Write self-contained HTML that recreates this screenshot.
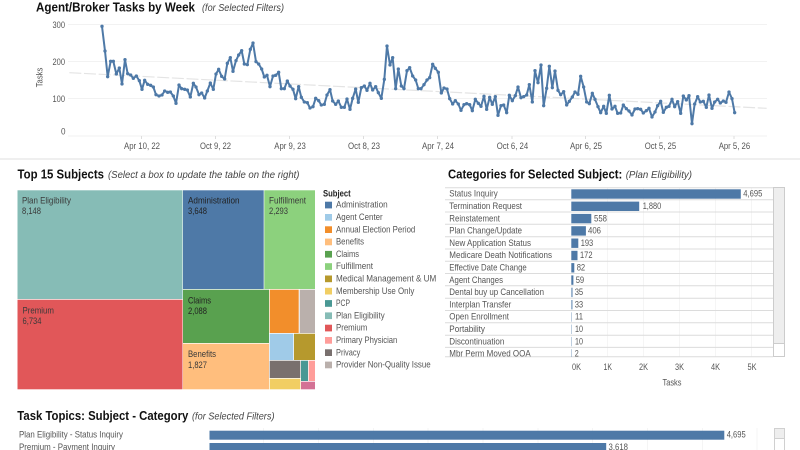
<!DOCTYPE html>
<html><head><meta charset="utf-8"><style>
html,body{margin:0;padding:0;background:#fff}
svg{display:block}
text{font-family:"Liberation Sans",sans-serif;font-size:9.5px;fill:#555}
.t{font-weight:bold;font-size:13px;fill:#111}
.i{font-style:italic;font-size:10.5px;fill:#444}
.d{fill:#3a3a3a}
</style></head><body>
<svg width="800" height="450" viewBox="0 0 800 450" xmlns="http://www.w3.org/2000/svg">
<defs>
<marker id="m" markerUnits="userSpaceOnUse" markerWidth="12" markerHeight="12" viewBox="0 0 12 12" refX="6" refY="6"><circle cx="6" cy="6" r="5" fill="#4e79a7"/></marker>
<clipPath id="c1"><rect x="445" y="187" width="330" height="170"/></clipPath>
</defs>
<rect width="800" height="450" fill="#fff"/>

<!-- Top chart -->
<text class="t" x="36" y="11.5" textLength="159" lengthAdjust="spacingAndGlyphs">Agent/Broker Tasks by Week</text>
<text class="i" x="202" y="11" textLength="82" lengthAdjust="spacingAndGlyphs">(for Selected Filters)</text>
<g stroke="#f2f2f2" stroke-width="1">
<path d="M68 24.5H767M68 61.5H767M68 98.5H767M68 136H767"/>
<path d="M141.5 136v3M215.5 136v3M289.5 136v3M363.5 136v3M437.5 136v3M512 136v3M585.5 136v3M659.5 136v3M734 136v3" stroke="#ddd"/>
</g>
<text x="52.5" y="28" textLength="12.5" lengthAdjust="spacingAndGlyphs">300</text>
<text x="52.5" y="65" textLength="12.5" lengthAdjust="spacingAndGlyphs">200</text>
<text x="52.5" y="102" textLength="12.5" lengthAdjust="spacingAndGlyphs">100</text>
<text x="61" y="134.5" textLength="4.5" lengthAdjust="spacingAndGlyphs">0</text>
<text transform="translate(42.5,87.3) rotate(-90)" textLength="19.7" lengthAdjust="spacingAndGlyphs">Tasks</text>
<text x="124" y="149" textLength="36" lengthAdjust="spacingAndGlyphs">Apr 10, 22</text>
<text x="200" y="149" textLength="31" lengthAdjust="spacingAndGlyphs">Oct 9, 22</text>
<text x="274.3" y="149" textLength="31.5" lengthAdjust="spacingAndGlyphs">Apr 9, 23</text>
<text x="348" y="149" textLength="32" lengthAdjust="spacingAndGlyphs">Oct 8, 23</text>
<text x="422" y="149" textLength="32" lengthAdjust="spacingAndGlyphs">Apr 7, 24</text>
<text x="496.7" y="149" textLength="31.5" lengthAdjust="spacingAndGlyphs">Oct 6, 24</text>
<text x="570" y="149" textLength="32" lengthAdjust="spacingAndGlyphs">Apr 6, 25</text>
<text x="644.7" y="149" textLength="31.5" lengthAdjust="spacingAndGlyphs">Oct 5, 25</text>
<text x="718.7" y="149" textLength="31.5" lengthAdjust="spacingAndGlyphs">Apr 5, 26</text>
<g transform="scale(.33333)">
<line x1="208" y1="218" x2="2300" y2="325" stroke="#e4e4e4" stroke-width="3.5" stroke-dasharray="36 8"/>
<g fill="none" stroke="#4e79a7" stroke-width="6" stroke-linejoin="round">
<polyline marker-start="url(#m)" marker-mid="url(#m)" marker-end="url(#m)" points="306,79 315,153 323,230 332,184 340,184 349,222 358,204 366,252 375,179 383,221 392,225 400,235 409,228 418,242 426,268 434,241 443,253 452,256 460,261 468,284 477,288 486,285 494,273 503,277 511,276 520,288 528,310 537,255 545,266 554,268 562,270 571,291 580,250 588,261 597,284 605,279 614,294 622,273 631,249 640,268 648,222 656,208 665,229 674,237 682,190 691,173 699,214 708,182 716,165 725,152 733,192 742,194 751,148 759,129 768,185 776,192 785,207 793,231 801,226"/>
<polyline transform="translate(795,0)" marker-mid="url(#m)" marker-end="url(#m)" points="6,226 15,260 24,228 32,226 41,217 49,266 58,266 67,243 75,258 84,268 92,296 101,260 109,292 118,306 127,308 135,324 144,320 152,295 161,302 169,315 178,313 186,285 195,269 203,303 212,313 220,303 229,322 238,322 246,297 255,328 263,295 272,267 280,307 289,263 298,258 306,271 315,250 323,270 332,260 340,278 349,295 358,238 366,138 375,195 383,173 392,266 400,207 409,258 417,266 426,212 434,203 443,228 452,240 460,266 468,266 477,254 486,240 494,233 503,193 511,205 520,217 529,279 537,264 546,267 554,296 563,312 571,302 580,312 588,331 597,314 605,311 614,314 622,332 631,298 640,310 648,319 657,289 665,328 674,292 682,313 691,290 699,346 708,317 716,315 725,338 733,286 742,302 751,287 759,261 768,293 776,290 785,285 793,254 802,306 810,212"/>
<polyline transform="translate(1590,0)" marker-mid="url(#m)" marker-end="url(#m)" points="15,213 24,248 33,195 41,317 50,265 58,199 67,263 75,213 84,271 92,284 101,275 110,315 118,304 127,291 135,276 144,283 152,229 161,261 170,306 178,311 187,280 195,298 204,320 212,338 221,319 229,340 238,286 246,327 255,319 263,340 272,339 280,315 289,326 297,333 306,345 315,327 323,326 332,328 340,339 349,332 357,325 366,351 375,336 383,317 392,304 400,337 409,322 417,319 426,298 434,320 443,305 452,340 460,288 469,300 477,287 486,371 494,312 503,290 511,306 520,304 529,322 537,285 546,325 554,306 563,298 571,309 580,303 588,307 597,276 606,296 614,338"/>
</g></g>
<rect x="0" y="158" width="800" height="2" fill="#efefef"/>

<!-- Treemap -->
<text class="t" x="17.5" y="178.7" textLength="86.5" lengthAdjust="spacingAndGlyphs">Top 15 Subjects</text>
<text class="i" x="108" y="178" textLength="191.5" lengthAdjust="spacingAndGlyphs">(Select a box to update the table on the right)</text>
<rect x="17.5" y="190.3" width="165" height="108.7" fill="#86bcb6"/>
<rect x="17.5" y="299.7" width="165" height="89.6" fill="#e15759"/>
<rect x="183" y="190.3" width="80.7" height="98.7" fill="#4e79a7"/>
<rect x="264.3" y="190.3" width="50.7" height="98.7" fill="#8cd17d"/>
<rect x="183" y="289.7" width="86" height="53.3" fill="#59a14f"/>
<rect x="183" y="343.7" width="86" height="45.6" fill="#ffbe7d"/>
<rect x="269.7" y="289.7" width="29" height="43.3" fill="#f28e2b"/>
<rect x="299.7" y="289.7" width="15.3" height="43.3" fill="#bab0ac"/>
<rect x="269.7" y="333.7" width="23.6" height="26.3" fill="#a0cbe8"/>
<rect x="294" y="333.7" width="21" height="26.3" fill="#b6992d"/>
<rect x="269.7" y="360.7" width="30.6" height="17.3" fill="#79706e"/>
<rect x="269.7" y="378.7" width="30.6" height="10.6" fill="#f1ce63"/>
<rect x="301" y="360.7" width="7" height="20.3" fill="#499894"/>
<rect x="308.7" y="360.7" width="6.3" height="20.3" fill="#ff9d9a"/>
<rect x="301" y="381.7" width="14" height="7.6" fill="#d37295"/>
<g class="tm">
<text class="d" x="22" y="203.7" textLength="49" lengthAdjust="spacingAndGlyphs">Plan Eligibility</text>
<text class="d" x="22" y="214" textLength="19" lengthAdjust="spacingAndGlyphs">8,148</text>
<text class="d" x="22.5" y="313.3" textLength="31.5" lengthAdjust="spacingAndGlyphs">Premium</text>
<text class="d" x="22.5" y="324" textLength="19" lengthAdjust="spacingAndGlyphs">6,734</text>
<text class="d" x="188" y="203.7" textLength="51.5" lengthAdjust="spacingAndGlyphs" style="fill:#222">Administration</text>
<text class="d" x="188" y="214" textLength="19" lengthAdjust="spacingAndGlyphs" style="fill:#222">3,648</text>
<text class="d" x="269" y="203.7" textLength="37" lengthAdjust="spacingAndGlyphs">Fulfillment</text>
<text class="d" x="269" y="214" textLength="19" lengthAdjust="spacingAndGlyphs">2,293</text>
<text class="d" x="188" y="303.3" textLength="23" lengthAdjust="spacingAndGlyphs" style="fill:#222">Claims</text>
<text class="d" x="188" y="314" textLength="19" lengthAdjust="spacingAndGlyphs" style="fill:#222">2,088</text>
<text class="d" x="188" y="357" textLength="28" lengthAdjust="spacingAndGlyphs">Benefits</text>
<text class="d" x="188" y="368" textLength="19" lengthAdjust="spacingAndGlyphs">1,827</text>
</g>

<!-- Legend -->
<text x="323" y="196.7" textLength="27.7" lengthAdjust="spacingAndGlyphs" style="font-weight:bold;fill:#222">Subject</text>
<rect x="325" y="201.7" width="7" height="6.7" fill="#4e79a7"/><text x="336" y="207.7" textLength="51.7" lengthAdjust="spacingAndGlyphs">Administration</text>
<rect x="325" y="214" width="7" height="6.7" fill="#a0cbe8"/><text x="336" y="220" textLength="46.7" lengthAdjust="spacingAndGlyphs">Agent Center</text>
<rect x="325" y="226.3" width="7" height="6.7" fill="#f28e2b"/><text x="336" y="232.3" textLength="79.3" lengthAdjust="spacingAndGlyphs">Annual Election Period</text>
<rect x="325" y="238.6" width="7" height="6.7" fill="#ffbe7d"/><text x="336" y="244.6" textLength="28" lengthAdjust="spacingAndGlyphs">Benefits</text>
<rect x="325" y="250.9" width="7" height="6.7" fill="#59a14f"/><text x="336" y="256.9" textLength="23" lengthAdjust="spacingAndGlyphs">Claims</text>
<rect x="325" y="263.2" width="7" height="6.7" fill="#8cd17d"/><text x="336" y="269.2" textLength="37" lengthAdjust="spacingAndGlyphs">Fulfillment</text>
<rect x="325" y="275.5" width="7" height="6.7" fill="#b6992d"/><text x="336" y="281.5" textLength="100.3" lengthAdjust="spacingAndGlyphs">Medical Management &amp; UM</text>
<rect x="325" y="287.8" width="7" height="6.7" fill="#f1ce63"/><text x="336" y="293.8" textLength="78.3" lengthAdjust="spacingAndGlyphs">Membership Use Only</text>
<rect x="325" y="300.1" width="7" height="6.7" fill="#499894"/><text x="336" y="306.1" textLength="14" lengthAdjust="spacingAndGlyphs">PCP</text>
<rect x="325" y="312.4" width="7" height="6.7" fill="#86bcb6"/><text x="336" y="318.4" textLength="48.7" lengthAdjust="spacingAndGlyphs">Plan Eligibility</text>
<rect x="325" y="324.7" width="7" height="6.7" fill="#e15759"/><text x="336" y="330.7" textLength="31.3" lengthAdjust="spacingAndGlyphs">Premium</text>
<rect x="325" y="337" width="7" height="6.7" fill="#ff9d9a"/><text x="336" y="343" textLength="61.3" lengthAdjust="spacingAndGlyphs">Primary Physician</text>
<rect x="325" y="349.3" width="7" height="6.7" fill="#79706e"/><text x="336" y="355.3" textLength="24.3" lengthAdjust="spacingAndGlyphs">Privacy</text>
<rect x="325" y="361.6" width="7" height="6.7" fill="#bab0ac"/><text x="336" y="367.6" textLength="94.7" lengthAdjust="spacingAndGlyphs">Provider Non-Quality Issue</text>

<!-- Categories -->
<text class="t" x="448" y="178.7" textLength="174.3" lengthAdjust="spacingAndGlyphs">Categories for Selected Subject:</text>
<text class="i" x="625.7" y="178" textLength="66.3" lengthAdjust="spacingAndGlyphs">(Plan Eligibility)</text>
<path d="M607.5 187.5V357M643.5 187.5V357M679.5 187.5V357M715.5 187.5V357M751.5 187.5V357" stroke="#f5f5f5" stroke-width="1"/>
<path d="M445 187.7H773M445 199.7H773M445 212H773M445 224.3H773M445 236.7H773M445 249H773M445 261.3H773M445 273.5H773M445 285.8H773M445 298.2H773M445 310.5H773M445 322.8H773M445 335.2H773M445 347.4H773M445 356.7H773" stroke="#dcdcdc" stroke-width="1"/>
<g clip-path="url(#c1)">
<g fill="#4e79a7">
<rect x="571.3" y="189.3" width="169.5" height="9.4"/>
<rect x="571.3" y="201.6" width="67.9" height="9.4"/>
<rect x="571.3" y="213.9" width="20" height="9.4"/>
<rect x="571.3" y="226.2" width="14.6" height="9.4"/>
<rect x="571.3" y="238.5" width="7" height="9.4"/>
<rect x="571.3" y="250.8" width="6.2" height="9.4"/>
<rect x="571.3" y="263.1" width="3" height="9.4"/>
<rect x="571.3" y="275.4" width="2.1" height="9.4"/>
<rect x="571.3" y="287.7" width="1.3" height="9.4" opacity=".8"/>
<rect x="571.3" y="300" width="1.2" height="9.4" opacity=".8"/>
<rect x="571.3" y="312.3" width=".6" height="9.4" opacity=".6"/>
<rect x="571.3" y="324.6" width=".6" height="9.4" opacity=".6"/>
<rect x="571.3" y="336.9" width=".6" height="9.4" opacity=".6"/>
<rect x="571.3" y="349.2" width=".6" height="9.4" opacity=".6"/>
</g>
<text x="449.3" y="196.7" textLength="48.4" lengthAdjust="spacingAndGlyphs">Status Inquiry</text>
<text x="449.3" y="209" textLength="72.7" lengthAdjust="spacingAndGlyphs">Termination Request</text>
<text x="449.3" y="221.3" textLength="50.7" lengthAdjust="spacingAndGlyphs">Reinstatement</text>
<text x="449.3" y="233.6" textLength="72.7" lengthAdjust="spacingAndGlyphs">Plan Change/Update</text>
<text x="449.3" y="245.9" textLength="81.7" lengthAdjust="spacingAndGlyphs">New Application Status</text>
<text x="449.3" y="258.2" textLength="102.7" lengthAdjust="spacingAndGlyphs">Medicare Death Notifications</text>
<text x="449.3" y="270.5" textLength="77.4" lengthAdjust="spacingAndGlyphs">Effective Date Change</text>
<text x="449.3" y="282.8" textLength="53.7" lengthAdjust="spacingAndGlyphs">Agent Changes</text>
<text x="449.3" y="295.1" textLength="94.7" lengthAdjust="spacingAndGlyphs">Dental buy up Cancellation</text>
<text x="449.3" y="307.4" textLength="62" lengthAdjust="spacingAndGlyphs">Interplan Transfer</text>
<text x="449.3" y="319.7" textLength="59.7" lengthAdjust="spacingAndGlyphs">Open Enrollment</text>
<text x="449.3" y="332" textLength="35.7" lengthAdjust="spacingAndGlyphs">Portability</text>
<text x="449.3" y="344.3" textLength="55" lengthAdjust="spacingAndGlyphs">Discontinuation</text>
<text x="449.3" y="356.6" textLength="81.4" lengthAdjust="spacingAndGlyphs">Mbr Perm Moved OOA</text>
<text x="743.3" y="196.7" textLength="19" lengthAdjust="spacingAndGlyphs">4,695</text>
<text x="642.7" y="209" textLength="18.5" lengthAdjust="spacingAndGlyphs">1,880</text>
<text x="594" y="221.3" textLength="13" lengthAdjust="spacingAndGlyphs">558</text>
<text x="588" y="233.6" textLength="13" lengthAdjust="spacingAndGlyphs">406</text>
<text x="580.7" y="245.9" textLength="12.5" lengthAdjust="spacingAndGlyphs">193</text>
<text x="580" y="258.2" textLength="12.5" lengthAdjust="spacingAndGlyphs">172</text>
<text x="576.7" y="270.5" textLength="8.5" lengthAdjust="spacingAndGlyphs">82</text>
<text x="575.7" y="282.8" textLength="8.5" lengthAdjust="spacingAndGlyphs">59</text>
<text x="574.7" y="295.1" textLength="8.5" lengthAdjust="spacingAndGlyphs">35</text>
<text x="574.7" y="307.4" textLength="8.5" lengthAdjust="spacingAndGlyphs">33</text>
<text x="575" y="319.7" textLength="8" lengthAdjust="spacingAndGlyphs">11</text>
<text x="575" y="332" textLength="8" lengthAdjust="spacingAndGlyphs">10</text>
<text x="575" y="344.3" textLength="8" lengthAdjust="spacingAndGlyphs">10</text>
<text x="574.7" y="356.6" textLength="4" lengthAdjust="spacingAndGlyphs">2</text>
</g>
<rect x="773.5" y="187.5" width="11" height="169" fill="#fff" stroke="#ccc"/>
<rect x="774" y="188" width="10" height="155" fill="#eee"/>
<path d="M774 343.5H784" stroke="#ccc"/>
<text x="572" y="370" textLength="9" lengthAdjust="spacingAndGlyphs">0K</text>
<text x="603.5" y="370" textLength="8.5" lengthAdjust="spacingAndGlyphs">1K</text>
<text x="639" y="370" textLength="9" lengthAdjust="spacingAndGlyphs">2K</text>
<text x="675" y="370" textLength="9" lengthAdjust="spacingAndGlyphs">3K</text>
<text x="711" y="370" textLength="9" lengthAdjust="spacingAndGlyphs">4K</text>
<text x="747.5" y="370" textLength="9" lengthAdjust="spacingAndGlyphs">5K</text>
<text x="662.5" y="385.5" textLength="19" lengthAdjust="spacingAndGlyphs">Tasks</text>

<!-- Bottom -->
<text class="t" x="17.3" y="420" textLength="171" lengthAdjust="spacingAndGlyphs">Task Topics: Subject - Category</text>
<text class="i" x="192" y="419.5" textLength="82.5" lengthAdjust="spacingAndGlyphs">(for Selected Filters)</text>
<path d="M263.5 428V450M318.5 428V450M373.5 428V450M428 428V450M483 428V450M538 428V450M592.5 428V450M647.5 428V450M702.5 428V450M757 428V450" stroke="#f5f5f5"/>
<rect x="209.5" y="430.7" width="514.8" height="9" fill="#4e79a7"/>
<rect x="209.5" y="443" width="396.7" height="9" fill="#4e79a7"/>
<text x="19" y="437.7" textLength="104" lengthAdjust="spacingAndGlyphs">Plan Eligibility - Status Inquiry</text>
<text x="19" y="450" textLength="96" lengthAdjust="spacingAndGlyphs">Premium - Payment Inquiry</text>
<text x="726.7" y="437.7" textLength="19" lengthAdjust="spacingAndGlyphs">4,695</text>
<text x="608.5" y="450" textLength="19.5" lengthAdjust="spacingAndGlyphs">3,618</text>
<rect x="774.5" y="428.5" width="10" height="30" fill="#fff" stroke="#d0d0d0"/>
<rect x="775" y="429" width="9" height="9" fill="#eee"/>
<path d="M775 438.5H784" stroke="#d0d0d0"/>
</svg>
</body></html>
